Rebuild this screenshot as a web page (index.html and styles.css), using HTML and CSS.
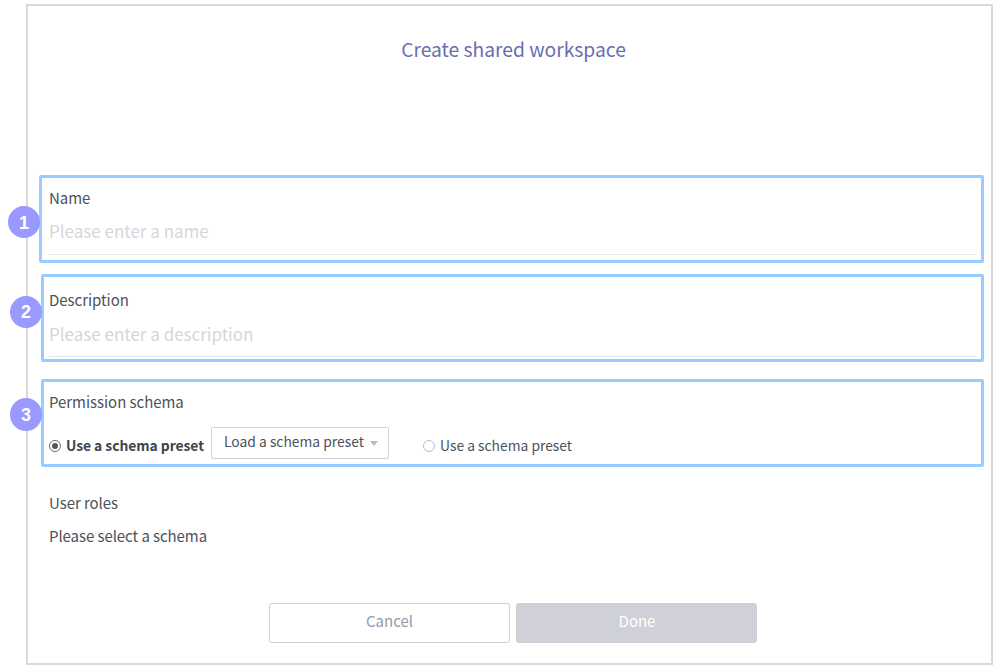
FILE: index.html
```html
<!DOCTYPE html>
<html lang="en">
<head>
<meta charset="utf-8">
<title>Create shared workspace</title>
<link rel="stylesheet" href="styles.css">
</head>
<body>
<main class="dialog">
  <h1 class="title">Create shared workspace</h1>
  <section class="section section-name">
    <span class="badge">1</span>
    <div class="label">Name</div>
    <div class="field">Please enter a name</div>
  </section>
  <section class="section section-description">
    <span class="badge">2</span>
    <div class="label">Description</div>
    <div class="field">Please enter a description</div>
  </section>
  <section class="section section-schema">
    <span class="badge">3</span>
    <div class="label">Permission schema</div>
    <div class="options">
      <div class="option option-selected"><span class="radio radio-on"></span><span class="preset-bold">Use a schema preset</span></div>
      <div class="select"><span class="select-text">Load a schema preset</span><span class="caret"></span></div>
      <div class="option option-other"><span class="radio"></span><span class="preset">Use a schema preset</span></div>
    </div>
  </section>
  <section class="roles">
    <div class="roles-title">User roles</div>
    <div class="roles-text">Please select a schema</div>
  </section>
  <div class="actions">
    <button class="button button-cancel">Cancel</button>
    <button class="button button-done">Done</button>
  </div>
</main>
</body>
</html>
```
FILE: styles.css
```css
* { box-sizing: border-box; }
body {
  margin: 0;
  padding: 4px 15px 3px 26px;
  background: #fff;
  color: #4b515b;
  font-family: "Noto Sans CJK KR", "Noto Sans", sans-serif;
  font-size: 15px;
}
.dialog {
  display: flex;
  flex-direction: column;
  width: 967px;
  height: 661px;
  border: 2px solid #d9d9d9;
  white-space: nowrap;
}
.title {
  margin: 29px 0 112px;
  padding-left: 8px;
  text-align: center;
  font-size: 19.25px;
  font-weight: 400;
  line-height: 28px;
  color: #666eaf;
}
.section {
  position: relative;
  flex: none;
  height: 88px;
  margin: 0 7px 0 13px;
  border: 3px solid #99ccff;
  border-radius: 2px;
  padding: 8px 4px 0 5px;
}
.section-name { margin-left: 11px; padding-left: 7px; }
.section-description { margin-top: 11px; padding-top: 11px; }
.section-schema { margin-top: 17px; }
.label { height: 24px; line-height: 24px; letter-spacing: -0.04px; }
.field {
  height: 45px;
  padding-top: 7px;
  border-bottom: 1px solid #e5e6e9;
  font-size: 17px;
  line-height: 28px;
  color: #d5d6dc;
}
.section-description .field { padding-top: 8px; }
.badge {
  position: absolute;
  left: -34px;
  top: 28px;
  width: 32px;
  height: 32px;
  border-radius: 50%;
  background: #9999ff;
  color: #fff;
  font: bold 18px/34px "Liberation Sans", Arial, sans-serif;
  text-align: center;
}
.section-description .badge { top: 19px; line-height: 33px; }
.section-schema .badge { top: 16px; height: 33px; }
.options { display: flex; align-items: flex-start; margin-top: 13px; font-size: 13.85px; }
.option { display: flex; align-items: center; height: 24px; margin-top: 7px; line-height: 22px; }
.option-selected { width: 162px; color: #3f444d; }
.option-other { margin-left: 34px; }
.radio {
  display: flex;
  align-items: center;
  justify-content: center;
  flex: none;
  width: 12px;
  height: 12px;
  margin-right: 5px;
  border: 1px solid #b9bbc4;
  border-radius: 50%;
}
.radio-on { border-color: #666b75; }
.radio-on::after { content: ""; width: 6px; height: 6px; border-radius: 50%; background: #50555f; }
.preset, .preset-bold { padding-bottom: 2px; }
.preset-bold { font-weight: 700; letter-spacing: -0.04px; }
.select {
  display: flex;
  align-items: flex-start;
  width: 178px;
  height: 32px;
  border: 1px solid #d0d1d8;
  border-radius: 2px;
  padding: 1px 0 0 12px;
  line-height: 24px;
}
.caret {
  margin: 12px 0 0 6px;
  border: 4px solid transparent;
  border-top: 5px solid #b9bbc4;
  border-bottom: 0;
}
.roles { padding: 24px 0 0 21px; line-height: 24px; letter-spacing: -0.07px; }
.roles-text { margin-top: 9px; }
.actions { display: flex; gap: 6px; margin: 55px 0 0 241px; }
.button {
  width: 241px;
  height: 40px;
  border: 1px solid #cfcfd8;
  border-radius: 3px;
  padding: 0 0 5px;
  background: #fff;
  color: #929ba8;
  font: inherit;
}
.button-done { padding-left: 1px; background: #d0d0d9; color: #fff; }
```
